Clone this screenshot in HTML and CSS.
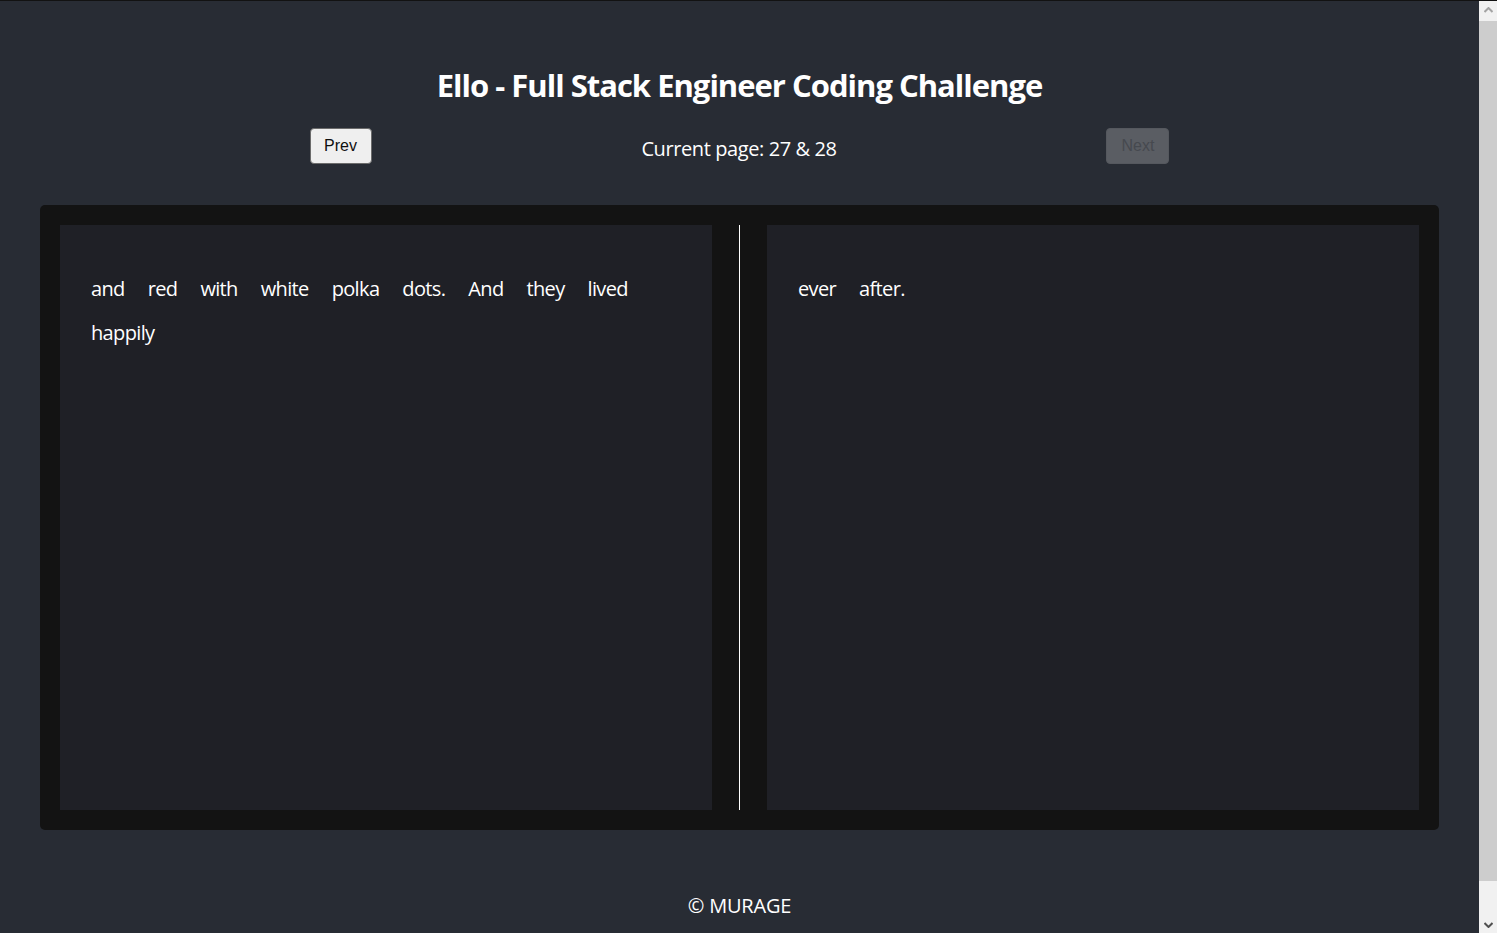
FILE: index.html
```html
<!DOCTYPE html>
<html lang="en">
<head>
<meta charset="utf-8">
<title>Ello - Full Stack Engineer Coding Challenge</title>
<link rel="stylesheet" href="styles.css">
</head>
<body>
<div class="window">
  <div class="app">
    <h1 class="title">Ello - Full Stack Engineer Coding Challenge</h1>
    <div class="nav">
      <button class="nav-btn" type="button">Prev</button>
      <span class="current">Current page: 27 &amp; 28</span>
      <button class="nav-btn" type="button" disabled>Next</button>
    </div>
    <div class="book">
      <div class="page">
        <span class="word">and</span><span class="word">red</span><span class="word">with</span><span class="word">white</span><span class="word">polka</span><span class="word">dots.</span><span class="word">And</span><span class="word">they</span><span class="word">lived</span><span class="word">happily</span>
      </div>
      <div class="divider"></div>
      <div class="page">
        <span class="word">ever</span><span class="word">after.</span>
      </div>
    </div>
    <footer class="footer">© MURAGE</footer>
  </div>
  <div class="scrollbar" aria-hidden="true">
    <div class="sb-btn sb-up">
      <svg width="9" height="6" viewBox="0 0 9 6"><path d="M0.5 5 L4.5 1 L8.5 5" fill="none" stroke="#a3a3a3" stroke-width="2"/></svg>
    </div>
    <div class="sb-thumb"></div>
    <div class="sb-track"></div>
    <div class="sb-btn sb-down">
      <svg width="9" height="6" viewBox="0 0 9 6"><path d="M0.5 1 L4.5 5 L8.5 1" fill="none" stroke="#505050" stroke-width="2"/></svg>
    </div>
  </div>
</div>
</body>
</html>
```
FILE: styles.css
```css
html {
  background: #282c34;
  overflow: hidden;
}
body {
  margin: 0;
  background: #282c34;
  color: #ffffff;
  font-family: "Open Sans", "Noto Sans", sans-serif;
}
.window {
  display: flex;
  align-items: flex-start;
  border-top: 1px solid #121212;
}
.app {
  flex: 1;
  min-width: 0;
  display: flex;
  flex-direction: column;
  align-items: center;
  padding: 63px 40px 57px;
}
.title {
  margin: 0;
  font-size: 31px;
  line-height: 42px;
  font-weight: 700;
  letter-spacing: -1px;
}
.nav {
  width: 860px;
  margin-top: 22px;
  display: flex;
  align-items: center;
  justify-content: space-between;
}
.current {
  font-size: 20px;
  line-height: 27px;
  padding-top: 4px;
  letter-spacing: -0.4px;
}
.nav-btn {
  width: 62px;
  height: 36px;
  padding: 0 0 1px;
  font-family: "Liberation Sans", Arial, sans-serif;
  font-size: 16px;
  color: #101010;
  background: #efefef;
  border: 1px solid #6b6b6b;
  border-radius: 4px;
}
.nav-btn:disabled {
  width: 63px;
  background: #5a5d63;
  color: #46494f;
  border-color: #55585e;
}
.book {
  align-self: stretch;
  margin-top: 41px;
  background: #131313;
  border-radius: 5px;
  padding: 20px;
  display: flex;
  gap: 27px;
  height: 585px;
}
.page {
  flex: 1;
  background: #1f2026;
  padding: 42px 31px;
  display: flex;
  flex-wrap: wrap;
  align-content: flex-start;
  column-gap: 23px;
  font-size: 20px;
  line-height: 44px;
  letter-spacing: -0.65px;
}
.divider {
  width: 1px;
  background: #ffffff;
}
.footer {
  margin-top: 62px;
  font-size: 20px;
  line-height: 27px;
  letter-spacing: -0.2px;
}
.scrollbar {
  flex: none;
  width: 18px;
  height: 932px;
  position: sticky;
  top: 0;
  display: flex;
  flex-direction: column;
  background: #f1f1f1;
}
.sb-btn {
  height: 17px;
  flex: none;
  display: flex;
  align-items: center;
  justify-content: center;
}
.sb-up {
  padding-bottom: 2px;
}
.sb-thumb {
  flex: none;
  height: 860px;
  margin-top: 1px;
  background: #cdcdcd;
}
.sb-track {
  flex: 1;
}
```
